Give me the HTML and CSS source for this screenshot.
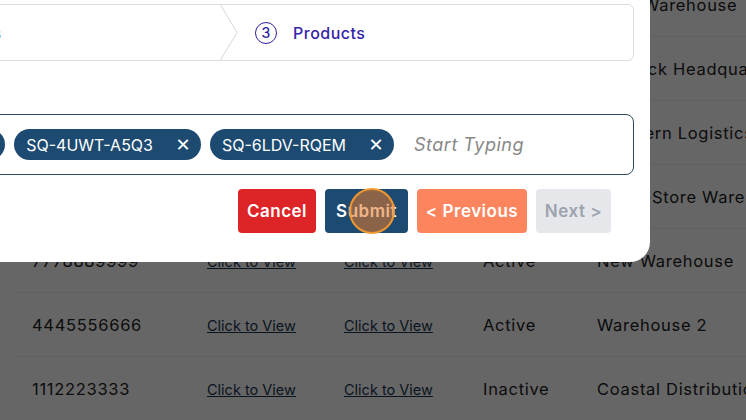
FILE: index.html
```html
<!DOCTYPE html>
<html>
<head>
<meta charset="utf-8">
<link rel="stylesheet" href="styles.css">
</head>
<body>
<div class="page">
  <table class="grid">
    <colgroup><col class="c1"><col class="c2"><col class="c3"><col class="c4"><col></colgroup>
    <tr><td>9990001111</td><td><a>Click to View</a></td><td><a>Click to View</a></td><td>Active</td><td>Main Warehouse</td></tr>
    <tr><td>2223334444</td><td><a>Click to View</a></td><td><a>Click to View</a></td><td>Active</td><td>Outback Headquarters</td></tr>
    <tr><td>5556667777</td><td><a>Click to View</a></td><td><a>Click to View</a></td><td>Active</td><td>Northern Logistics</td></tr>
    <tr><td>8889990000</td><td><a>Click to View</a></td><td><a>Click to View</a></td><td>Active</td><td>Mega-Store Warehouse</td></tr>
    <tr><td>7778889999</td><td><a>Click to View</a></td><td><a>Click to View</a></td><td>Active</td><td>New Warehouse</td></tr>
    <tr><td>4445556666</td><td><a>Click to View</a></td><td><a>Click to View</a></td><td>Active</td><td>Warehouse 2</td></tr>
    <tr><td>1112223333</td><td><a>Click to View</a></td><td><a>Click to View</a></td><td>Inactive</td><td>Coastal Distribution</td></tr>
  </table>
</div>
<div class="overlay"></div>
<div class="modal">
  <div class="stepper">
    <div class="step">
      <div class="step-body"><span class="num">1</span><span class="label">Warehouse</span></div>
    </div>
    <div class="step">
      <svg class="chev" width="18" height="55" viewBox="0 0 18 55"><polyline points="0.5,0 17,27.5 0.5,55" fill="none" stroke="#d6d6d6" stroke-width="1"/></svg>
      <div class="step-body"><span class="num">2</span><span class="label">Details</span></div>
    </div>
    <div class="step step-last active">
      <svg class="chev" width="18" height="55" viewBox="0 0 18 55"><polyline points="0.5,0 17,27.5 0.5,55" fill="none" stroke="#d6d6d6" stroke-width="1"/></svg>
      <div class="step-body"><span class="num">3</span><span class="label">Products</span></div>
    </div>
  </div>
  <div class="tagbox">
    <div class="chips">
      <span class="chip">SQ-1KDM-7PLA<span class="x">✕</span></span>
      <span class="chip">SQ-9HTR-2ZXB<span class="x">✕</span></span>
      <span class="chip">SQ-3NVE-8QWC<span class="x">✕</span></span>
      <span class="chip">SQ-4UWT-A5Q3<span class="x">✕</span></span>
      <span class="chip">SQ-6LDV-RQEM<span class="x">✕</span></span>
    </div>
    <input class="typing" type="text" placeholder="Start Typing">
  </div>
  <div class="actions">
    <button class="btn cancel">Cancel</button>
    <button class="btn submit">Submit</button>
    <button class="btn prev">&lt; Previous</button>
    <button class="btn next">Next &gt;</button>
  </div>
</div>
<div class="cursor"></div>
</body>
</html>
```
FILE: styles.css
```css
html, body {
  margin: 0;
  padding: 0;
  width: 746px;
  height: 420px;
  overflow: hidden;
  background: #ffffff;
  font-family: "Inter", "DejaVu Sans", sans-serif;
  position: relative;
}

.page {
  margin-top: -27px;
  padding-left: 15px;
}

.grid {
  border-collapse: collapse;
  width: 900px;
  font-size: 16.5px;
  color: #222;
  letter-spacing: 0.7px;
}
.grid .c1 { width: 175px; }
.grid .c2 { width: 137px; }
.grid .c3 { width: 139px; }
.grid .c4 { width: 114px; }
.grid td {
  height: 63px;
  padding: 0 0 0 17px;
  border-bottom: 1px solid #f0f0f0;
  white-space: nowrap;
  vertical-align: middle;
}
.grid a {
  color: #1c3550;
  text-decoration: underline;
  font-size: 14.5px;
  letter-spacing: 0;
}

.overlay {
  position: absolute;
  inset: 0;
  background: rgba(0, 0, 0, 0.6);
}

.modal {
  position: absolute;
  left: -491px;
  top: -20px;
  width: 1109px;
  padding: 24px 16px 29px 16px;
  background: #fff;
  border-radius: 20px;
}

.stepper {
  display: flex;
  height: 55px;
  border: 1px solid #dcdcdc;
  border-radius: 6px;
  background: #fff;
}
.step {
  width: 347px;
  display: flex;
  align-items: stretch;
}
.step-last { flex: 1; }
.chev { flex: none; display: block; }
.step-body {
  display: flex;
  align-items: center;
  gap: 16px;
  padding-left: 17px;
  color: #555;
  font-size: 16px;
  font-weight: 500;
  letter-spacing: 0.5px;
}
.num {
  width: 20px;
  height: 20px;
  border: 1.5px solid #888;
  border-radius: 50%;
  display: flex;
  align-items: center;
  justify-content: center;
  font-size: 14px;
  letter-spacing: 0;
}
.active .step-body { color: #3523a8; }
.active .num { border-color: #2e1f9e; color: #2e1f9e; }

.tagbox {
  margin-top: 53px;
  height: 59px;
  border: 1.5px solid #2d4b5c;
  border-radius: 8px;
  display: flex;
  align-items: center;
  padding: 0 12px;
  gap: 8px;
}
.chips {
  flex: 1;
  display: flex;
  justify-content: flex-end;
  gap: 9px;
  overflow: hidden;
  min-width: 0;
}
.chip {
  flex: none;
  display: flex;
  align-items: center;
  height: 31px;
  padding: 0 10px 0 12px;
  border-radius: 16px;
  background: #1d4a71;
  color: #fff;
  font-size: 16px;
  white-space: nowrap;
}
.chip .x {
  margin-left: 22px;
  font-size: 18px;
  width: 16px;
  text-align: center;
}
.typing {
  width: 207px;
  border: none;
  outline: none;
  padding: 0 0 0 12px;
  font-family: inherit;
  font-size: 18px;
  letter-spacing: 0.5px;
  background: transparent;
}
.typing::placeholder {
  color: #888;
  font-style: italic;
}

.actions {
  display: flex;
  justify-content: flex-end;
  gap: 9px;
  margin-top: 14px;
  padding-right: 23px;
}
.btn {
  height: 44px;
  border: none;
  border-radius: 4px;
  font-family: inherit;
  font-size: 17px;
  font-weight: 600;
  letter-spacing: 0.5px;
  color: #fff;
  padding: 0;
}
.cancel { background: #dd2426; width: 78px; }
.submit { background: #1d4a71; width: 83px; }
.prev { background: #fc855d; width: 110px; }
.next { background: #e5e7eb; color: #9ca3af; width: 75px; }

.cursor {
  position: absolute;
  left: 349px;
  top: 188px;
  width: 42px;
  height: 42px;
  border-radius: 50%;
  border: 2px solid #f0982e;
  background: rgba(230, 120, 40, 0.55);
}
```
